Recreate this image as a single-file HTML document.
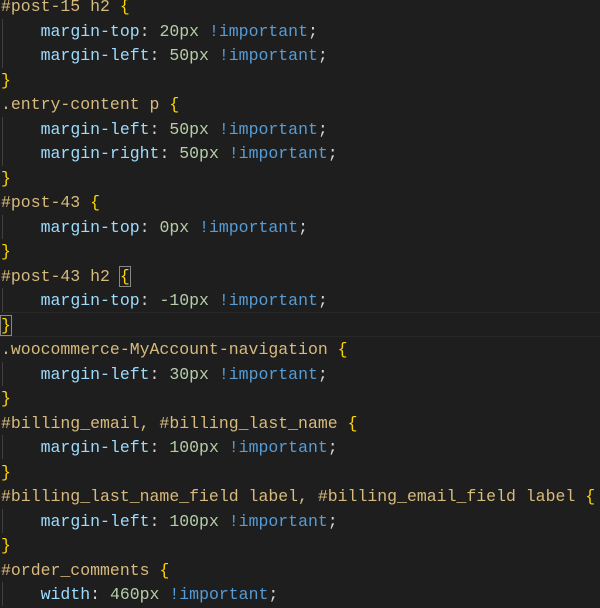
<!DOCTYPE html><html><head><style>
body{margin:0;background:#1e1e1e;width:600px;height:600px;overflow:hidden;position:relative}
pre{margin:0;position:absolute;top:-5px;left:1px;font-family:"Liberation Mono",monospace;font-size:16.5px;line-height:24.5px;color:#d4d4d4}
.s{color:#d7ba7d}.p{color:#9cdcfe}.n{color:#b5cea8}.k{color:#569cd6}.b{color:#ffd700}
.cur{position:absolute;left:0;top:312px;width:600px;height:23px;border-top:1px solid #282828;border-bottom:1px solid #282828}
.bb{outline:1px solid #888;}
.g{position:absolute;left:2px;width:1px;background:#404040}
</style></head><body>
<div class="cur"></div>
<div class="g" style="top:19px;height:49px"></div>
<div class="g" style="top:117px;height:49px"></div>
<div class="g" style="top:215px;height:24px"></div>
<div class="g" style="top:288px;height:24px"></div>
<div class="g" style="top:362px;height:24px"></div>
<div class="g" style="top:435px;height:24px"></div>
<div class="g" style="top:509px;height:24px"></div>
<div class="g" style="top:582px;height:24px"></div>
<pre><span class="s">#post-15 h2</span> <span class="b">{</span>
    <span class="p">margin-top</span>: <span class="n">20px</span> <span class="k">!important</span>;
    <span class="p">margin-left</span>: <span class="n">50px</span> <span class="k">!important</span>;
<span class="b">}</span>
<span class="s">.entry-content p</span> <span class="b">{</span>
    <span class="p">margin-left</span>: <span class="n">50px</span> <span class="k">!important</span>;
    <span class="p">margin-right</span>: <span class="n">50px</span> <span class="k">!important</span>;
<span class="b">}</span>
<span class="s">#post-43</span> <span class="b">{</span>
    <span class="p">margin-top</span>: <span class="n">0px</span> <span class="k">!important</span>;
<span class="b">}</span>
<span class="s">#post-43 h2</span> <span class="b bb">{</span>
    <span class="p">margin-top</span>: <span class="n">-10px</span> <span class="k">!important</span>;
<span class="b bb">}</span>
<span class="s">.woocommerce-MyAccount-navigation</span> <span class="b">{</span>
    <span class="p">margin-left</span>: <span class="n">30px</span> <span class="k">!important</span>;
<span class="b">}</span>
<span class="s">#billing_email, #billing_last_name</span> <span class="b">{</span>
    <span class="p">margin-left</span>: <span class="n">100px</span> <span class="k">!important</span>;
<span class="b">}</span>
<span class="s">#billing_last_name_field label, #billing_email_field label</span> <span class="b">{</span>
    <span class="p">margin-left</span>: <span class="n">100px</span> <span class="k">!important</span>;
<span class="b">}</span>
<span class="s">#order_comments</span> <span class="b">{</span>
    <span class="p">width</span>: <span class="n">460px</span> <span class="k">!important</span>;
</pre>
</body></html>
